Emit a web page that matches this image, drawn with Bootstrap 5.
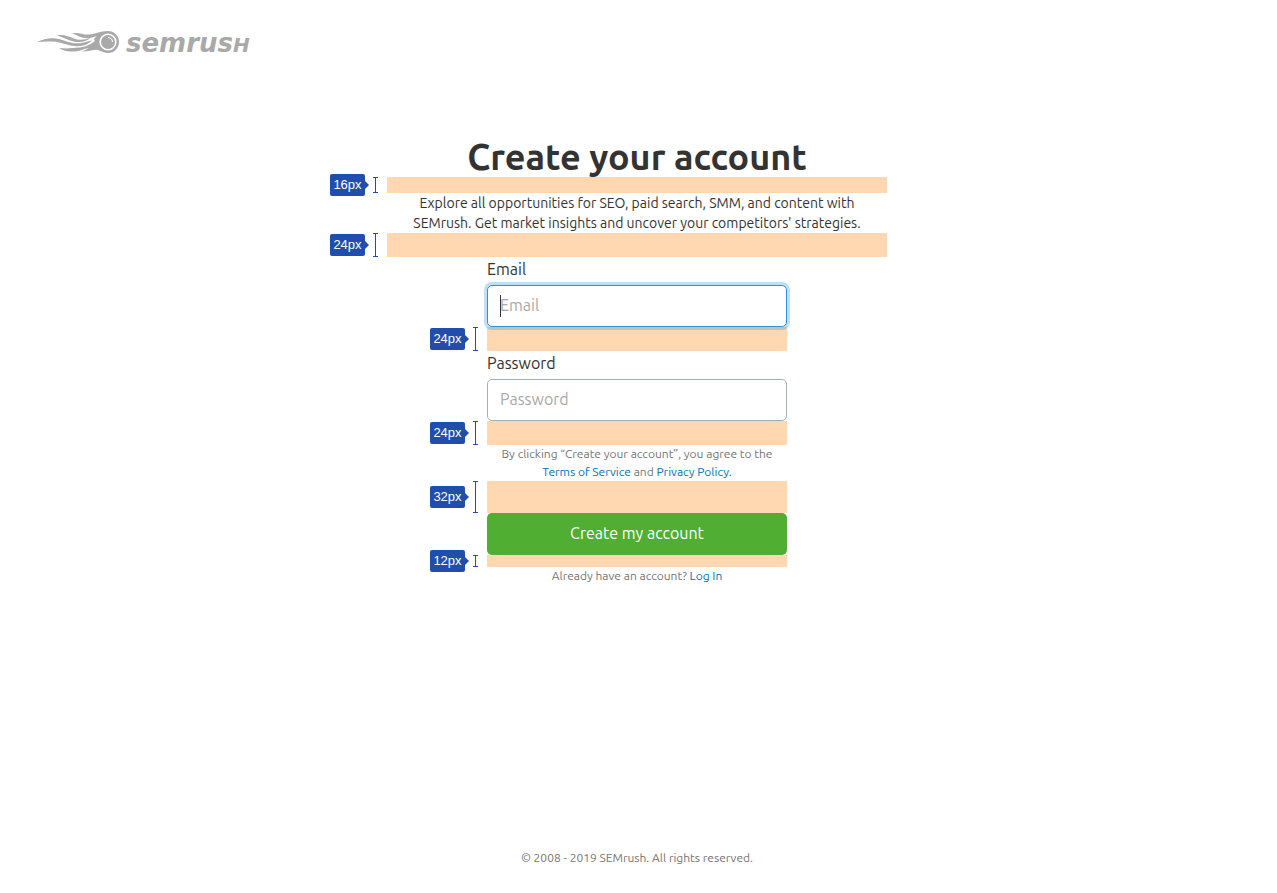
<!DOCTYPE html>
<html lang="en">
<head>
<meta charset="utf-8">
<meta name="viewport" content="width=device-width, initial-scale=1">
<title>Create your account – SEMrush</title>
<link rel="stylesheet" href="https://cdn.jsdelivr.net/npm/bootstrap@5.3.0/dist/css/bootstrap.min.css">
<style>
  body { font-family: Ubuntu, "Open Sans", sans-serif; color: #333; font-size: 16px; line-height: 24px; }
  a { color: #0071bc; text-decoration: none; }
  .site-header { padding: 28px 36px 0; }
  .brand { color: #a9a9a9; gap: 6px; height: 28px; }
  .brand-name { font: italic bold 26px/28px "DejaVu Sans", sans-serif; }
  .brand-name span { font-size: 20px; text-transform: uppercase; }
  .signup { padding: 77px 3px 0 0; }
  .intro { max-width: 500px; }
  .intro h1 { font-size: 36px; line-height: 40px; font-weight: 700; }
  .intro p { font-size: 14px; line-height: 20px; }
  .signup-form { max-width: 300px; }
  .signup-form label { padding-bottom: 4px; display: block; }
  .signup-form .form-control { height: 42px; padding: 0 12px 2px; border-color: #a6b0b3; border-radius: 5px; color: #333; }
  .signup-form .form-control::placeholder { color: #a9a9a9; }
  .signup-form .form-control:focus { border-color: #2b94e1; box-shadow: 0 0 0 3px rgba(43, 148, 225, .3); position: relative; z-index: 1; }
  /* Steady text cursor while the focused field is still empty */
  .signup-form .form-control:focus:placeholder-shown { caret-color: transparent; background: #fff linear-gradient(#333, #333) 12px 9px / 1px 22px no-repeat; }
  .btn-create { height: 42px; padding: 0 0 2px; border: 0; border-radius: 5px; background: #50ae33; color: #fff; }
  .btn-create:hover { background: #469a2c; color: #fff; }
  .fine { font-size: 12px; line-height: 18px; color: #757575; }
  .site-footer { padding: 24px 3px 26px 0; }

  /* Spacing annotations: a tinted strip with its size tag and bracket on the left */
  .space { position: relative; background: #ffd7b1; }
  .space-12 { height: 12px; }
  .space-16 { height: 16px; }
  .space-24 { height: 24px; }
  .space-32 { height: 32px; }
  .space-mark { position: absolute; right: 100%; top: 0; height: 100%; margin-right: 9px; gap: 4px; }
  .space-tag { width: 35px; height: 22px; border-radius: 2px; background: #214eac; color: #fff; font: 13px/22px "Liberation Sans", sans-serif; text-align: center; }
  .space-tag + i { border: 4px solid transparent; border-left-color: #214eac; border-right: 0; margin-left: -4px; }
  .bracket { width: 5px; height: 100%; border: solid #214eac; border-width: 1px 0; background: linear-gradient(#214eac, #214eac) center / 1px 100% no-repeat; }
</style>
</head>
<body class="d-flex flex-column min-vh-100">
<header class="site-header">
  <a href="#" class="brand d-inline-flex align-items-center" aria-label="SEMrush">
    <svg width="84" height="24" viewBox="0 0 84 24" fill="currentColor" aria-hidden="true">
      <path d="M1 12C7 9 14 7.500 20 8.500C29 10 35 14.500 45 13C49 12.500 52 11 56 10.500C52 14 49 15.500 44 16C33 17 27 12 17 11.500C11 11.200 6 11.500 1 12Z"/>
      <path d="M21 5.500C27 4 33 6.500 38 8.500C43 10.500 49 10 55 7.500C51 11 46 12.500 41 12C34 11.500 28 7.500 21 5.500Z"/>
      <path d="M35 3.500C42 1.500 47 5 53 4.500C60 4 64 1 72 1A11 11 0 0 1 72 23C66 23 62 18.500 55 18C49 18 44 22 35 21.500C30 21.500 26 20 23 18C31 19 37 18 42 17.500C48 17.500 54 15 59 11C57 9 59 7.500 61 6C53 9 49 8.500 46 7.500C42 6.500 40 4 35 3.500Z"/>
      <path d="M45 21.500C51 20.500 54 16 60 15L66 21C59 17.500 54 22 45 21.500Z"/>
      <circle cx="72" cy="12" r="7.800" fill="none" stroke="#fff" stroke-width="1.600"/>
      <path d="M72 7.500A4.700 4.700 0 0 1 76.500 12" fill="none" stroke="#fff" stroke-width="1"/>
    </svg>
    <span class="brand-name pt-1">semrus<span>h</span></span>
  </a>
</header>

<main class="signup flex-grow-1">
  <section class="intro mx-auto text-center">
    <h1 class="mb-0">Create your account</h1>
    <div class="space space-16"><div class="space-mark d-flex align-items-center"><span class="space-tag">16px</span><i></i><span class="bracket"></span></div></div>
    <p class="mb-0">Explore all opportunities for SEO, paid search, SMM, and content with<br>SEMrush. Get market insights and uncover your competitors' strategies.</p>
    <div class="space space-24"><div class="space-mark d-flex align-items-center"><span class="space-tag">24px</span><i></i><span class="bracket"></span></div></div>
  </section>

  <form class="signup-form mx-auto">
    <label for="email">Email</label>
    <input type="email" class="form-control" id="email" placeholder="Email" autofocus>
    <div class="space space-24"><div class="space-mark d-flex align-items-center"><span class="space-tag">24px</span><i></i><span class="bracket"></span></div></div>
    <label for="password">Password</label>
    <input type="password" class="form-control" id="password" placeholder="Password">
    <div class="space space-24"><div class="space-mark d-flex align-items-center"><span class="space-tag">24px</span><i></i><span class="bracket"></span></div></div>
    <p class="fine text-center mb-0">By clicking “Create your account”, you agree to the <a href="#">Terms of Service</a> and <a href="#">Privacy Policy.</a></p>
    <div class="space space-32"><div class="space-mark d-flex align-items-center"><span class="space-tag">32px</span><i></i><span class="bracket"></span></div></div>
    <button type="submit" class="btn btn-create w-100 d-block">Create my account</button>
    <div class="space space-12"><div class="space-mark d-flex align-items-center"><span class="space-tag">12px</span><i></i><span class="bracket"></span></div></div>
    <p class="fine text-center mb-0">Already have an account? <a href="#">Log In</a></p>
  </form>
</main>

<footer class="site-footer fine text-center">© 2008 - 2019 SEMrush. All rights reserved.</footer>
<script src="https://cdn.jsdelivr.net/npm/bootstrap@5.3.0/dist/js/bootstrap.bundle.min.js"></script>
</body>
</html>
